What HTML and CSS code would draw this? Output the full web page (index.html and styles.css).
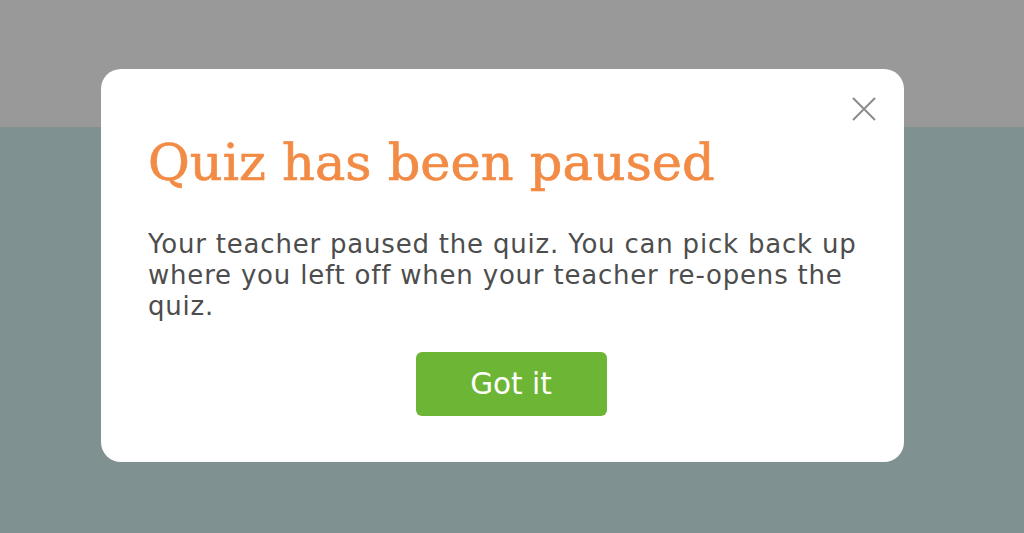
FILE: index.html
```html
<!DOCTYPE html>
<html>
<head>
<meta charset="utf-8">
<link rel="stylesheet" href="styles.css">
</head>
<body>
<div class="page">
  <div class="modal">
    <button class="close" aria-label="Close">
      <svg width="24" height="24" viewBox="0 0 24 24"><path d="M1 1 L23 23 M23 1 L1 23" stroke="#8c8c8c" stroke-width="2" fill="none"/></svg>
    </button>
    <h1 class="title">Quiz has been paused</h1>
    <p class="text">Your teacher paused the quiz. You can pick back up where you left off when your teacher re-opens the quiz.</p>
    <div class="actions">
      <button class="btn">Got it</button>
    </div>
  </div>
</div>
</body>
</html>
```
FILE: styles.css
```css
html, body {
  margin: 0;
  padding: 0;
  height: 100%;
}
body {
  background: linear-gradient(to bottom, #999999 0, #999999 127px, #7f9191 127px, #7f9191 100%);
  font-family: "DejaVu Sans", Verdana, sans-serif;
}
.page {
  padding-top: 69px;
  padding-left: 101px;
}
.modal {
  position: relative;
  box-sizing: border-box;
  width: 803px;
  height: 393px;
  background: #fff;
  border-radius: 20px;
  padding: 64px 47px 0 47px;
}
.close {
  position: absolute;
  top: 28px;
  right: 28px;
  background: none;
  border: 0;
  padding: 0;
  width: 24px;
  height: 24px;
  line-height: 0;
}
.title {
  margin: 0;
  font-family: "DejaVu Serif", "Roboto Slab", serif;
  font-weight: normal;
  font-size: 51px;
  line-height: 60px;
  color: #f28b45;
  -webkit-text-stroke: 0.7px #f28b45;
}
.text {
  margin: 36px 0 0 0;
  font-size: 26px;
  letter-spacing: 0.8px;
  line-height: 31px;
  color: #4d4d4d;
}
.actions {
  display: flex;
  justify-content: center;
  margin-top: 30px;
}
.btn {
  width: 191px;
  height: 64px;
  background: #6db535;
  color: #fff;
  border: 0;
  border-radius: 6px;
  font-family: "DejaVu Sans", Verdana, sans-serif;
  font-size: 29.5px;
  padding: 0;
  margin-left: 17px;
}
```
